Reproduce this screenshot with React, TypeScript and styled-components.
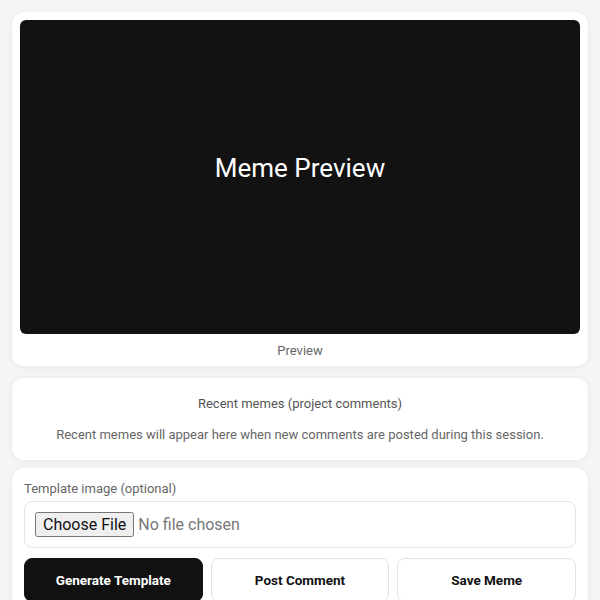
import styled, { createGlobalStyle } from "styled-components";

const Global = createGlobalStyle`
  html, body {
    margin: 0;
    padding: 0;
    background: #f5f5f5;
    font-family: Roboto, "Liberation Sans", sans-serif;
    color: #222;
  }
  * { box-sizing: border-box; }
`;

const Page = styled.main`
  display: flex;
  flex-direction: column;
  padding: 12px;
`;

const Card = styled.section<{ $pad: string; $mt?: number }>`
  background: #fff;
  border-radius: 12px;
  padding: ${(p) => p.$pad};
  margin-top: ${(p) => p.$mt ?? 0}px;
  box-shadow: 0 1px 6px rgba(0, 0, 0, 0.06);
`;

const PreviewBox = styled.div`
  height: 314px;
  background: #121212;
  border-radius: 6px;
  display: flex;
  align-items: center;
  justify-content: center;
  padding-bottom: 18px;
  color: #fff;
  font-size: 26px;
`;

const Caption = styled.p`
  margin: 8px 0 0;
  text-align: center;
  font-size: 13px;
  line-height: 17px;
  color: #666;
`;

const RecentTitle = styled.h2`
  margin: 0 0 11px;
  text-align: center;
  font-size: 13px;
  font-weight: 400;
  line-height: 20px;
  color: #555;
`;

const RecentText = styled.p`
  margin: 0;
  text-align: center;
  font-size: 13px;
  line-height: 20px;
  color: #666;
`;

const Label = styled.label`
  display: block;
  font-size: 13px;
  line-height: 17px;
  color: #666;
  margin-bottom: 4px;
`;

const FileBox = styled.div`
  border: 1px solid #e6e6e6;
  border-radius: 8px;
  padding: 10px;
  input {
    font-family: Roboto, "Liberation Sans", sans-serif;
    font-size: 16px;
    color: #777;
  }
  input::file-selector-button {
    font-family: Roboto, "Liberation Sans", sans-serif;
    font-size: 16px;
    color: #111;
    margin-right: 4px;
  }
`;

const Actions = styled.div`
  display: grid;
  grid-template-columns: repeat(3, 1fr);
  gap: 8px;
  margin-top: 10px;
`;

const Button = styled.button<{ $dark?: boolean }>`
  height: 44px;
  border-radius: 8px;
  border: 1px solid ${(p) => (p.$dark ? "#111" : "#e3e3e3")};
  background: ${(p) => (p.$dark ? "#111" : "#fff")};
  color: ${(p) => (p.$dark ? "#fff" : "#111")};
  font-family: Roboto, "Liberation Sans", sans-serif;
  font-size: 13.5px;
  font-weight: 700;
  cursor: pointer;
`;

export default function App() {
  return (
    <>
      <Global />
      <Page>
        <Card $pad="8px 8px 7px">
          <PreviewBox>Meme Preview</PreviewBox>
          <Caption>Preview</Caption>
        </Card>
        <Card $pad="16px 16px 15px" $mt={12}>
          <RecentTitle>Recent memes (project comments)</RecentTitle>
          <RecentText>
            Recent memes will appear here when new comments are posted during this session.
          </RecentText>
        </Card>
        <Card $pad="12px" $mt={8}>
          <Label htmlFor="tpl">Template image (optional)</Label>
          <FileBox>
            <input id="tpl" type="file" accept="image/*" />
          </FileBox>
          <Actions>
            <Button $dark>Generate Template</Button>
            <Button>Post Comment</Button>
            <Button>Save Meme</Button>
          </Actions>
        </Card>
      </Page>
    </>
  );
}
